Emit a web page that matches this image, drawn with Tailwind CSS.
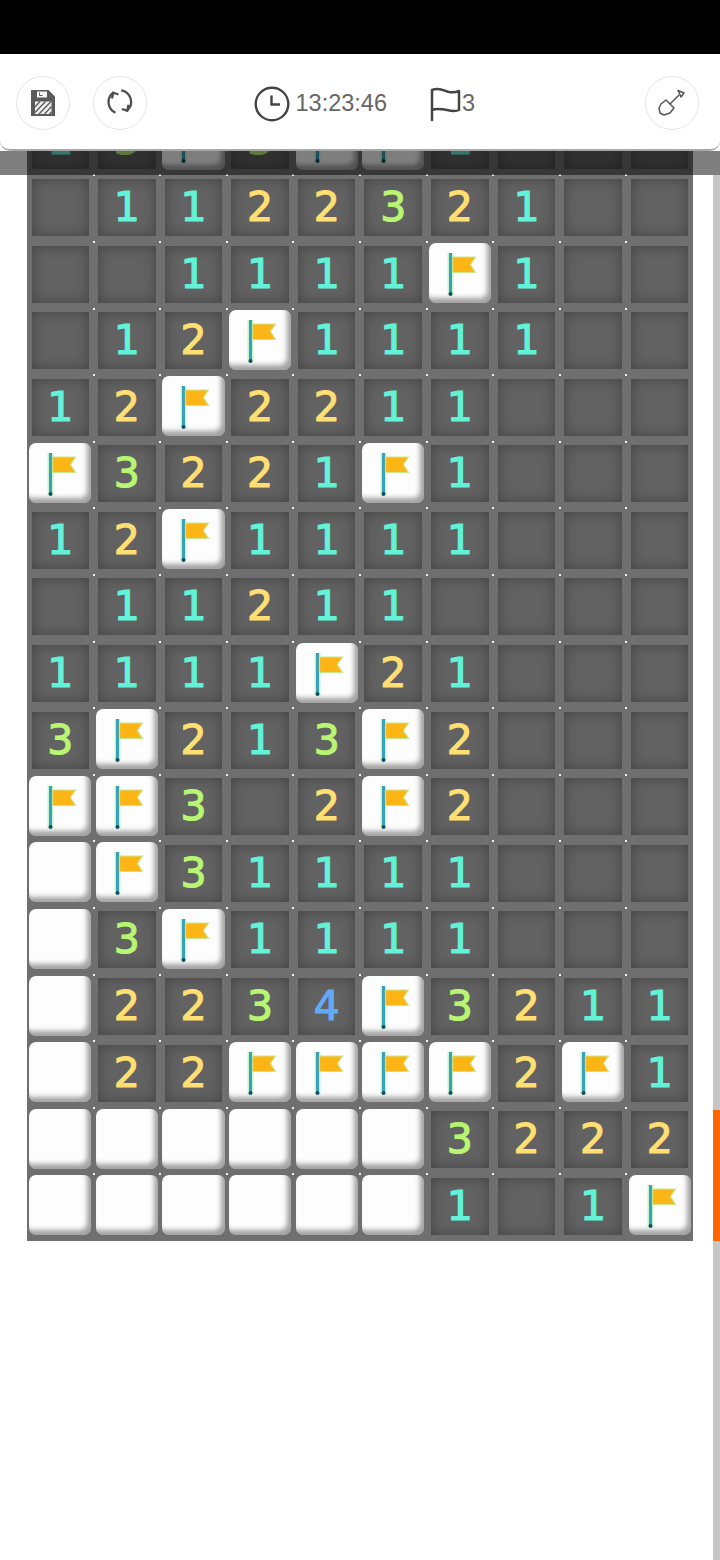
<!DOCTYPE html>
<html lang="en">
<head>
  <meta charset="UTF-8" />
  <meta name="viewport" content="width=device-width, initial-scale=1.0"/>
  <title>Minesweeper</title>
  <script src="https://cdn.jsdelivr.net/npm/@tailwindcss/browser@4"></script>
</head>
<body class="bg-white w-[720px] h-[1560px] overflow-hidden flex flex-col font-['Liberation_Sans',sans-serif]">

  <div class="h-[54px] shrink-0 bg-black"></div>

  <header class="relative z-20 h-[97px] shrink-0 flex items-center pl-[15.5px] pr-[21px] pt-[3px] bg-white rounded-b-[10px] border-b-2 border-[#a8a8a8]">
    <button class="w-[54px] h-[54px] rounded-full border border-[#e6e6e6] flex items-center justify-center">
      <svg width="26" height="28" viewBox="0 0 26 28">
        <path d="M1 1h17.500L25 7.500V27H1z" fill="#5a5a5a"/>
        <path d="M7 2.500h10v6H7z" fill="#f4f4f4"/>
        <path d="M9.500 3.500v3h3" fill="none" stroke="#5a5a5a" stroke-width="1"/>
        <path d="M5 12.500h16.500V25H5z" fill="#eee"/>
        <path d="M5 18l5-5.500M5 23.500L15.500 12.500M9 25L21 12.500M14.500 25l7-7.500M19.500 25l2-2" stroke="#5a5a5a" stroke-width="1.300" fill="none"/>
      </svg>
    </button>
    <button class="ml-[23px] w-[54px] h-[54px] rounded-full border border-[#e6e6e6] flex items-center justify-center">
      <svg width="26" height="26" viewBox="-1 -1 26 26" fill="none" stroke="#505050" stroke-width="2.300" class="-translate-y-px">
        <path d="M7.500 22.700A11.700 11.700 0 0 1 5.200 2.700"/>
        <path d="M4 8.500L5.200 2.700L10.500 4.500"/>
        <path d="M13.200 0.300A11.700 11.700 0 0 1 19.200 20.500"/>
        <path d="M20.500 14.800L19.200 20.700L13.800 19"/>
      </svg>
    </button>

    <div class="ml-[107px] mt-[2px] flex items-center">
      <svg width="36" height="36" viewBox="0 0 36 36" fill="none" stroke="#444" stroke-width="2.400" class="mr-[6px]">
        <circle cx="18" cy="18" r="16.300"/>
        <path d="M17.500 9.500V18.500H26"/>
      </svg>
      <span class="text-[23.5px] leading-none text-[#666]">13:23:46</span>
    </div>
    <div class="ml-[42px] mt-[2px] flex items-center">
      <svg width="32" height="36" viewBox="0 0 32 36" fill="none" stroke="#444" stroke-width="2.500" stroke-linejoin="round" stroke-linecap="round">
        <path d="M3 34V4c8-3 12 1 17 2 3 .5 7 .3 10-1V24c-4 2-8 1-12 0-5-1-10-2-15 0"/>
      </svg>
      <span class="ml-[1px] text-[23.5px] leading-none text-[#666]">3</span>
    </div>

    <button class="ml-auto w-[54px] h-[54px] rounded-full border border-[#e6e6e6] flex items-center justify-center">
      <svg width="30" height="30" viewBox="0 0 30 30" fill="none" stroke="#555" stroke-width="1.500" stroke-linejoin="round">
        <path d="M9 12L17 20L13 25L7 27L3 25L2 20L4 16z"/>
        <path d="M13 16L22 7"/>
        <path d="M21 2.500L27 5L24 9z"/>
      </svg>
    </button>
  </header>

  <main class="relative flex-1 overflow-hidden">
    <div id="board" class="grid grid-cols-10 w-[666px] ml-[27px] mt-[-42.2px] bg-[#6f6f6f]"></div>

    <!-- dim strip under the header -->
    <div class="absolute left-0 top-0 w-full h-[24.4px] bg-black/50"></div>

    <!-- scroll indicator -->
    <div class="absolute right-0 top-[24.4px] bottom-0 w-[7px] bg-[#c6c6c6]">
      <div class="absolute left-0 top-[934.6px] w-full h-[131px] bg-[#ff6600]"></div>
    </div>
  </main>

  <script>
    const rows = [
      "13F3FF1...",
      ".1122321..",
      "..1111F1..",
      ".12F1111..",
      "12F2211...",
      "F3221F1...",
      "12F1111...",
      ".11211....",
      "1111F21...",
      "3F213F2...",
      "FF3.2F2...",
      "WF31111...",
      "W3F1111...",
      "W2234F3211",
      "W22FFFF2F1",
      "WWWWWW3222",
      "WWWWWW1.1F"
    ];

    const numberColors = {
      "1": "text-[#62f2d8]",
      "2": "text-[#ffdf72]",
      "3": "text-[#b8f572]",
      "4": "text-[#62aaf5]"
    };

    const flag = `
      <svg width="62" height="60" viewBox="0 0 62 60" class="block">
        <path d="M21.500 10V52" stroke="#a6efb0" stroke-width="6" opacity="0.6"/>
        <path d="M21.500 10V51" stroke="#3aa0b8" stroke-width="3"/>
        <circle cx="21.500" cy="51" r="2" fill="#14505c"/>
        <path d="M23.500 14H46.500L41.500 21.500L46.500 29.500H23.500z" fill="#fdb515" stroke="#c9e88a" stroke-width="1.200"/>
      </svg>`;

    const tile = "h-[60px] mt-px mx-[2.3px] rounded-[7px] bg-[#fdfdfd] shadow-[inset_-4px_-5px_5px_rgba(0,0,0,0.36)]";
    const open = "flex items-center justify-center h-[57px] mt-[3.5px] mx-[4.5px] bg-[#626262] shadow-[inset_0_0_14px_rgba(0,0,0,0.32)] font-['DejaVu_Sans',sans-serif] text-[41px] leading-none [-webkit-text-stroke:1.2px]";

    let html = "";
    rows.forEach((row, r) => {
      [...row].forEach((c, i) => {
        let inner;
        if (c === "F") inner = `<div class="${tile}">${flag}</div>`;
        else if (c === "W") inner = `<div class="${tile}"></div>`;
        else if (c === ".") inner = `<div class="${open}"></div>`;
        else inner = `<div class="${open} ${numberColors[c]}">${c}</div>`;
        const dot = i > 0 ? `<span class="absolute -left-px -top-px w-[2px] h-[2px] bg-white/90"></span>` : "";
        html += `<div class="relative h-[66.6px]">${inner}${dot}</div>`;
      });
    });
    document.getElementById("board").innerHTML = html;
  </script>
</body>
</html>
